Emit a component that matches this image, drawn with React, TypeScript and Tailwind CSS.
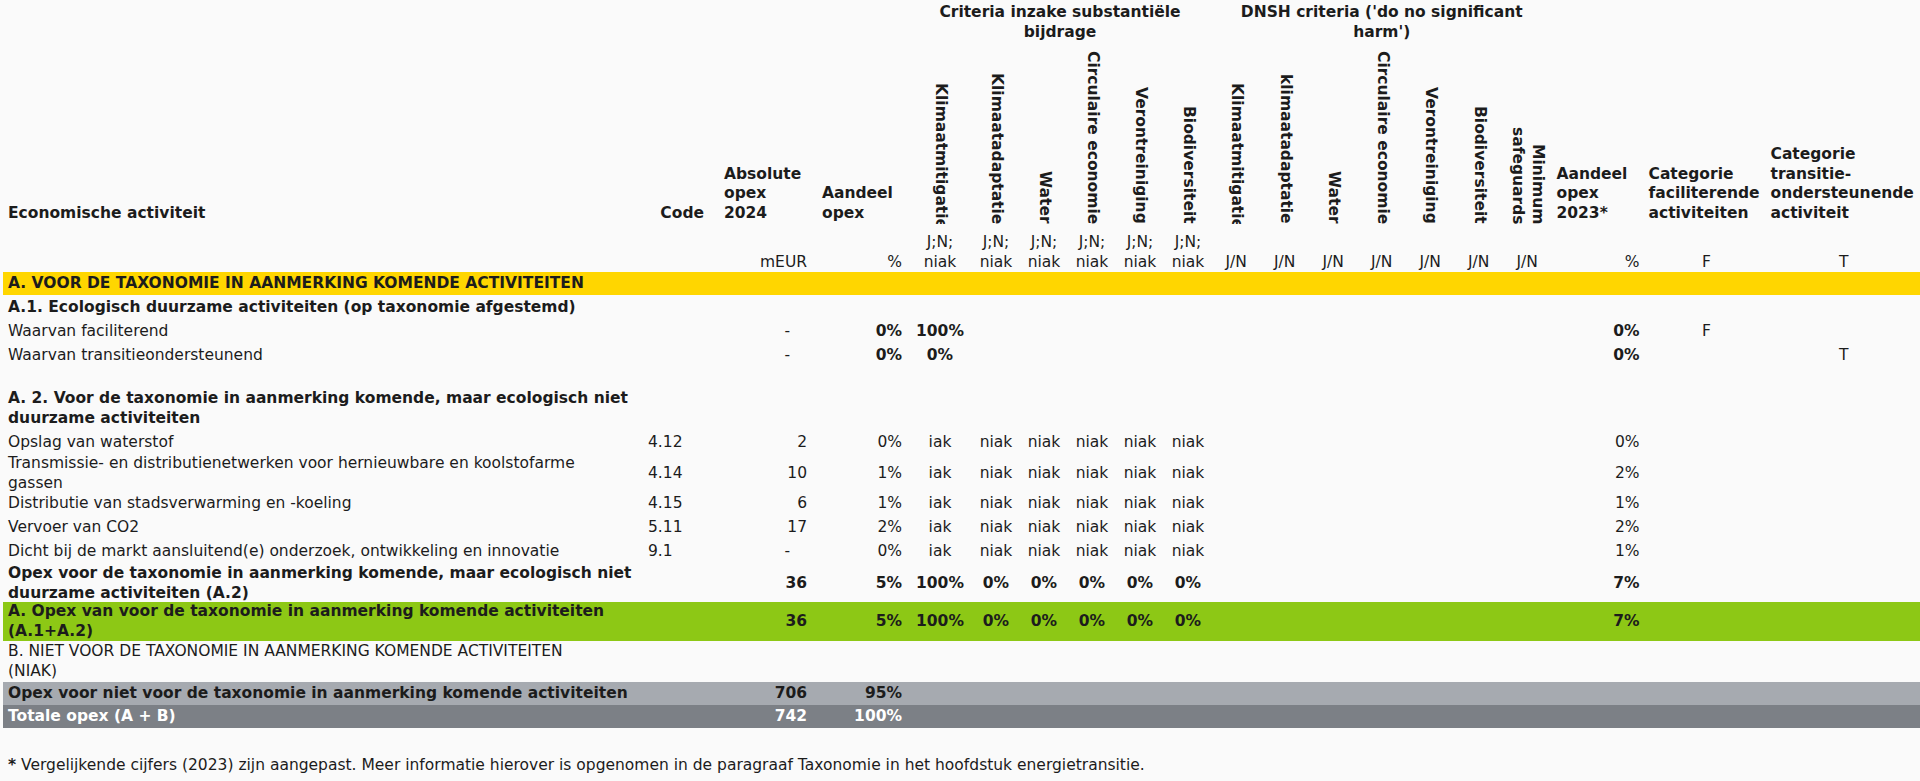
import React from "react";

const GRID =
  "grid grid-cols-[641px_76px_92px_96px_64px_repeat(5,48px)_repeat(7,48.5px)_94px_122px_1fr]";

type RowProps = {
  label?: React.ReactNode;
  h: string;
  bg?: string;
  bold?: boolean;
  code?: string;
  abs?: string;
  pct?: string;
  sub?: string[];
  y23?: string;
  f?: string;
  t?: string;
  numBold?: boolean;
  labelClass?: string;
};

function DataRow({ label, h, bg = "", bold, code, abs, pct, sub, y23, f, t, numBold, labelClass = "items-center" }: RowProps) {
  const nb = numBold ? "font-bold" : "";
  const cells = sub ?? ["", "", "", "", "", ""];
  const dash = abs === "-";
  return (
    <div className={`${GRID} ${h} ${bg} items-center`}>
      <div className={`flex h-full pl-[5px] whitespace-nowrap ${labelClass} ${bold ? "font-bold" : ""}`}>
        <div>{label}</div>
      </div>
      <div className="pl-[4px]">{code}</div>
      <div className={`text-right ${dash ? "pr-[22px]" : `pr-[5px] ${nb}`}`}>{abs}</div>
      <div className={`text-right pr-[6px] ${nb}`}>{pct}</div>
      {cells.map((c, i) => (
        <div key={i} className={`text-center ${nb}`}>
          {c}
        </div>
      ))}
      {Array.from({ length: 7 }).map((_, i) => (
        <div key={`d${i}`} />
      ))}
      <div className={`text-right pr-[6px] ${nb}`}>{y23}</div>
      <div className="text-center">{f}</div>
      <div className="text-center">{t}</div>
    </div>
  );
}

function VHead({ children, clip }: { children: React.ReactNode; clip?: boolean }) {
  return (
    <div className="flex items-end justify-center overflow-hidden">
      <div className={`[writing-mode:vertical-rl] text-end font-bold whitespace-nowrap ${clip ? "mb-[-5px]" : ""}`}>
        {children}
      </div>
    </div>
  );
}

const niak = ["iak", "niak", "niak", "niak", "niak", "niak"];
const totals = ["100%", "0%", "0%", "0%", "0%", "0%"];

export default function App() {
  return (
    <div className="w-[1920px] h-[781px] overflow-hidden bg-[#fafafa] text-[#1c1c1c] font-['DejaVu_Sans',sans-serif] text-[15.5px] leading-[19.5px]">
      <div className="ml-[3px]">
        {/* header */}
        <div className={`${GRID} h-[224px] grid-rows-[42px_1fr]`}>
          <div className="row-span-2 flex flex-col justify-end pl-[5px] pb-[1px] font-bold">
            <div>Economische activiteit</div>
          </div>
          <div className="row-span-2 flex flex-col justify-end items-end pr-[16px] pb-[1px] font-bold">
            <div>Code</div>
          </div>
          <div className="row-span-2 flex flex-col justify-end pl-[4px] pb-[1px] font-bold">
            <div>
              Absolute
              <br />
              opex
              <br />
              2024
            </div>
          </div>
          <div className="row-span-2 flex flex-col justify-end pl-[10px] pb-[1px] font-bold">
            <div>
              Aandeel
              <br />
              opex
            </div>
          </div>
          <div className="col-span-6 pt-[3px] text-center font-bold">
            Criteria inzake substantiële
            <br />
            bijdrage
          </div>
          <div className="col-span-7 pt-[3px] text-center font-bold">
            DNSH criteria ('do no significant
            <br />
            harm')
          </div>
          <div className="row-span-2 flex flex-col justify-end pl-[5px] pb-[1px] font-bold">
            <div>
              Aandeel
              <br />
              opex
              <br />
              2023*
            </div>
          </div>
          <div className="row-span-2 flex flex-col justify-end pl-[3px] pb-[1px] font-bold">
            <div>
              Categorie
              <br />
              faciliterende
              <br />
              activiteiten
            </div>
          </div>
          <div className="row-span-2 flex flex-col justify-end pl-[3px] pb-[1px] font-bold">
            <div>
              Categorie
              <br />
              transitie-
              <br />
              ondersteunende
              <br />
              activiteit
            </div>
          </div>
          <VHead clip>Klimaatmitigatie</VHead>
          <VHead>Klimaatadaptatie</VHead>
          <VHead>Water</VHead>
          <VHead>Circulaire economie</VHead>
          <VHead>Verontreiniging</VHead>
          <VHead>Biodiversiteit</VHead>
          <VHead clip>Klimaatmitigatie</VHead>
          <VHead>klimaatadaptatie</VHead>
          <VHead>Water</VHead>
          <VHead>Circulaire economie</VHead>
          <VHead>Verontreiniging</VHead>
          <VHead>Biodiversiteit</VHead>
          <VHead>
            Minimum
            <br />
            safeguards
          </VHead>
        </div>

        {/* units */}
        <div className={`${GRID} h-[48px] items-end`}>
          <div />
          <div />
          <div className="text-right pr-[5px]">mEUR</div>
          <div className="text-right pr-[6px]">%</div>
          {Array.from({ length: 6 }).map((_, i) => (
            <div key={i} className="text-center">
              J;N;
              <br />
              niak
            </div>
          ))}
          {Array.from({ length: 7 }).map((_, i) => (
            <div key={`j${i}`} className="text-center">
              J/N
            </div>
          ))}
          <div className="text-right pr-[6px]">%</div>
          <div className="text-center">F</div>
          <div className="text-center">T</div>
        </div>

        <DataRow h="h-[23px]" bg="bg-[#ffd600]" bold label="A. VOOR DE TAXONOMIE IN AANMERKING KOMENDE ACTIVITEITEN" />
        <DataRow h="h-[25px]" bold label="A.1. Ecologisch duurzame activiteiten (op taxonomie afgestemd)" />
        <DataRow
          h="h-[24px]"
          label="Waarvan faciliterend"
          abs="-"
          pct="0%"
          sub={["100%", "", "", "", "", ""]}
          y23="0%"
          f="F"
          numBold
        />
        <DataRow
          h="h-[24px]"
          label="Waarvan transitieondersteunend"
          abs="-"
          pct="0%"
          sub={["0%", "", "", "", "", ""]}
          y23="0%"
          t="T"
          numBold
        />
        <div className="h-[18px]" />
        <DataRow
          h="h-[45px]"
          bold
          labelClass="items-end pb-[3px]"
          label={
            <>
              A. 2. Voor de taxonomie in aanmerking komende, maar ecologisch niet
              <br />
              duurzame activiteiten
            </>
          }
        />
        <DataRow h="h-[23px]" label="Opslag van waterstof" code="4.12" abs="2" pct="0%" sub={niak} y23="0%" />
        <DataRow
          h="h-[38px]"
          label={
            <>
              Transmissie- en distributienetwerken voor hernieuwbare en koolstofarme
              <br />
              gassen
            </>
          }
          code="4.14"
          abs="10"
          pct="1%"
          sub={niak}
          y23="2%"
        />
        <DataRow h="h-[24px]" label="Distributie van stadsverwarming en -koeling" code="4.15" abs="6" pct="1%" sub={niak} y23="1%" />
        <DataRow h="h-[24px]" label="Vervoer van CO2" code="5.11" abs="17" pct="2%" sub={niak} y23="2%" />
        <DataRow
          h="h-[24px]"
          label="Dicht bij de markt aansluitend(e) onderzoek, ontwikkeling en innovatie"
          code="9.1"
          abs="-"
          pct="0%"
          sub={niak}
          y23="1%"
        />
        <DataRow
          h="h-[38px]"
          bold
          numBold
          label={
            <>
              Opex voor de taxonomie in aanmerking komende, maar ecologisch niet
              <br />
              duurzame activiteiten (A.2)
            </>
          }
          abs="36"
          pct="5%"
          sub={totals}
          y23="7%"
        />
        <DataRow
          h="h-[39px]"
          bg="bg-[#8dc815]"
          bold
          numBold
          label={
            <>
              A. Opex van voor de taxonomie in aanmerking komende activiteiten
              <br />
              (A.1+A.2)
            </>
          }
          abs="36"
          pct="5%"
          sub={totals}
          y23="7%"
        />
        <DataRow
          h="h-[41px]"
          label={
            <>
              B. NIET VOOR DE TAXONOMIE IN AANMERKING KOMENDE ACTIVITEITEN
              <br />
              (NIAK)
            </>
          }
        />
        <DataRow
          h="h-[23px]"
          bg="bg-[#a6aab0]"
          bold
          numBold
          label="Opex voor niet voor de taxonomie in aanmerking komende activiteiten"
          abs="706"
          pct="95%"
        />
        <div className="text-white">
          <DataRow h="h-[23px]" bg="bg-[#7c8086]" bold numBold label="Totale opex (A + B)" abs="742" pct="100%" />
        </div>

        <div className="mt-[28px] pl-[5px] whitespace-nowrap">
          <span className="font-bold">*</span> Vergelijkende cijfers (2023) zijn aangepast. Meer informatie hierover is
          opgenomen in de paragraaf Taxonomie in het hoofdstuk energietransitie.
        </div>
      </div>
    </div>
  );
}
